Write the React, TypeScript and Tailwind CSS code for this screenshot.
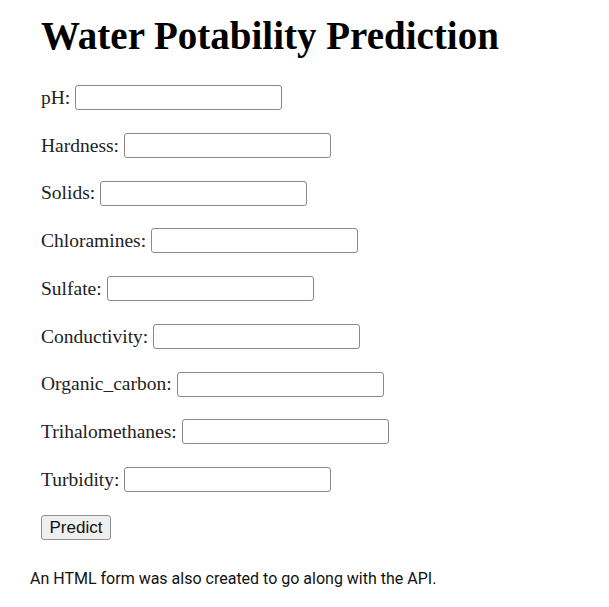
import React from "react";

const fields = [
  "pH",
  "Hardness",
  "Solids",
  "Chloramines",
  "Sulfate",
  "Conductivity",
  "Organic_carbon",
  "Trihalomethanes",
  "Turbidity",
];

export default function App() {
  return (
    <div className="w-[609px] h-[607px] bg-white text-black overflow-hidden">
      <div className="pl-[41px] pt-[13px] font-['Liberation_Serif',serif]">
        <h1 className="text-[39px] leading-[46px] font-bold">Water Potability Prediction</h1>
        <form className="mt-[26px] flex flex-col gap-[22.75px]">
          {fields.map((f) => (
            <div key={f} className="flex items-center h-[25px] text-[19.5px] text-[#222]">
              <span>{f}:</span>
              <input
                type="text"
                className="ml-[5px] w-[207px] h-[25px] border border-[#8a8a8a] rounded-[3px] bg-white"
              />
            </div>
          ))}
          <div className="h-[25px] flex items-center">
            <button
              type="button"
              className="w-[70px] h-[25px] border border-[#8f8f8f] rounded-[3px] bg-[#efefef] text-[17px] leading-none text-[#111] font-['Liberation_Sans',sans-serif]"
            >
              Predict
            </button>
          </div>
        </form>
      </div>
      <p className="pl-[30px] mt-[27px] text-[16px] text-[#111] font-['Roboto',sans-serif]">
        An HTML form was also created to go along with the API.
      </p>
    </div>
  );
}
